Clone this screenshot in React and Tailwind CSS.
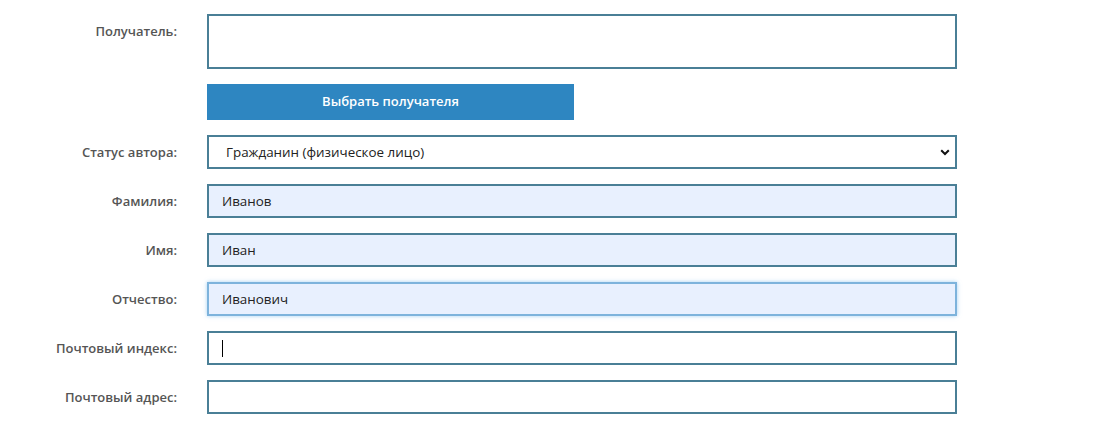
import React from "react";

const labelCls =
  "w-[177px] shrink-0 text-right text-[13px] font-semibold text-[#555] leading-none";
const font = { fontFamily: '"Open Sans", "Noto Sans", sans-serif' };

function Row({ label, children, top }) {
  return (
    <div className={"flex " + (top ? "items-start" : "items-center")}>
      <div className={labelCls + (top ? " pt-[11px]" : "")}>{label}</div>
      <div className="ml-[30px]">{children}</div>
    </div>
  );
}

function Field({ value, filled, focus, caret }) {
  return (
    <div
      className={
        "w-[750px] h-[34px] flex items-center pl-[13px] text-[13.4px] text-[#222] border-2 " +
        (focus
          ? "border-[#7db3dc] shadow-[0_0_4px_rgba(102,175,233,0.6)] bg-[#e8f0fe]"
          : filled
          ? "border-[#4a7f96] bg-[#e8f0fe]"
          : "border-[#4a7f96] bg-white")
      }
    >
      {caret ? <span className="w-px h-[17px] bg-black" /> : value}
    </div>
  );
}

export default function App() {
  return (
    <div className="w-[1100px] h-[428px] bg-white overflow-hidden" style={font}>
      <div className="flex flex-col gap-[15px] pt-[14px]">
        <Row label="Получатель:" top>
          <div className="w-[750px] h-[55px] border-2 border-[#4a7f96] bg-white" />
        </Row>
        <Row label="">
          <div className="w-[367px] h-[36px] bg-[#2e86c1] flex items-center justify-center text-white text-[13px] font-semibold">
            Выбрать получателя
          </div>
        </Row>
        <Row label="Статус автора:">
          <div className="w-[750px] h-[34px] flex items-center justify-between pl-[17px] pr-[5px] text-[13.4px] text-[#222] border-2 border-[#4a7f96] bg-white">
            <span>Гражданин (физическое лицо)</span>
            <svg width="10" height="7" viewBox="0 0 10 7">
              <path d="M1.2 1.2 L5 5 L8.8 1.2" fill="none" stroke="#111" strokeWidth="2" />
            </svg>
          </div>
        </Row>
        <Row label="Фамилия:">
          <Field value="Иванов" filled />
        </Row>
        <Row label="Имя:">
          <Field value="Иван" filled />
        </Row>
        <Row label="Отчество:">
          <Field value="Иванович" focus />
        </Row>
        <Row label="Почтовый индекс:">
          <Field caret />
        </Row>
        <Row label="Почтовый адрес:">
          <Field value="" />
        </Row>
      </div>
    </div>
  );
}
